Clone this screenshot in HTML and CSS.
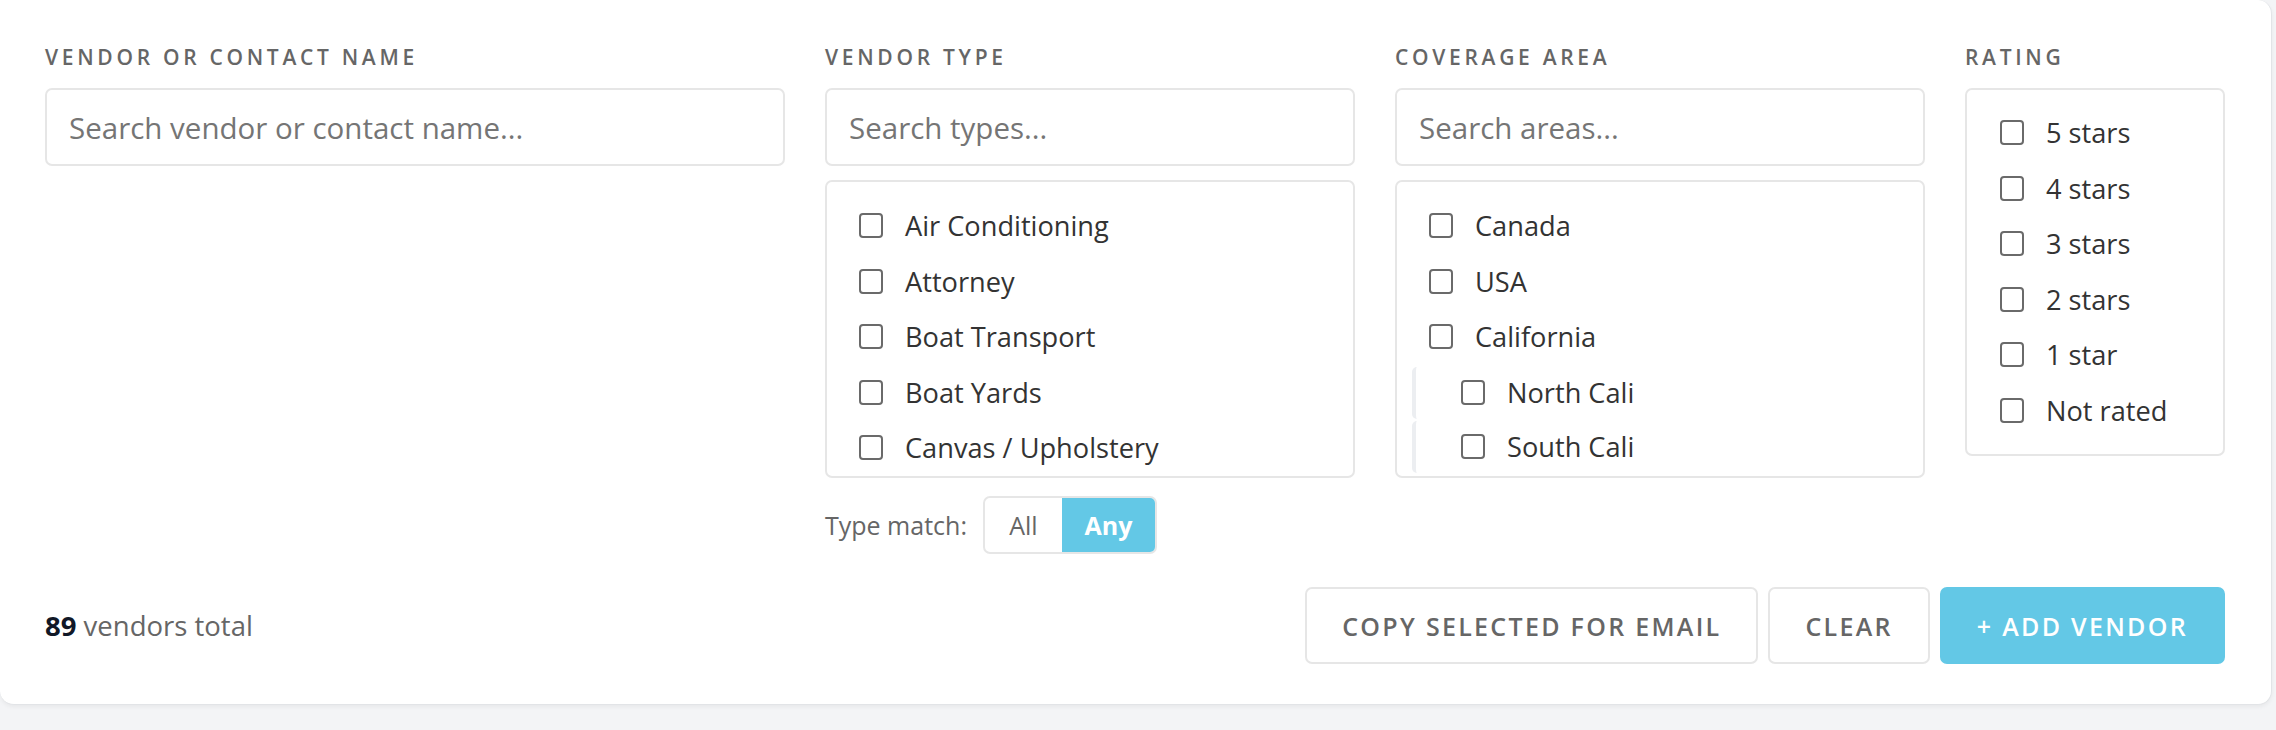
FILE: index.html
```html
<!DOCTYPE html>
<html lang="en">
<head>
<meta charset="utf-8">
<title>Vendors</title>
<link rel="stylesheet" href="styles.css">
</head>
<body>
<div class="card">
  <div class="filters">
    <div class="field">
      <div class="label">Vendor or contact name</div>
      <input class="search" type="text" placeholder="Search vendor or contact name...">
    </div>
    <div class="field">
      <div class="label">Vendor type</div>
      <input class="search" type="text" placeholder="Search types...">
      <div class="list">
        <label class="item"><input class="cb" type="checkbox"><span>Air Conditioning</span></label>
        <label class="item"><input class="cb" type="checkbox"><span>Attorney</span></label>
        <label class="item"><input class="cb" type="checkbox"><span>Boat Transport</span></label>
        <label class="item"><input class="cb" type="checkbox"><span>Boat Yards</span></label>
        <label class="item"><input class="cb" type="checkbox"><span>Canvas / Upholstery</span></label>
      </div>
      <div class="match">
        <span class="match-label">Type match:</span>
        <div class="seg">
          <span class="seg-opt">All</span>
          <span class="seg-opt active">Any</span>
        </div>
      </div>
    </div>
    <div class="field">
      <div class="label">Coverage area</div>
      <input class="search" type="text" placeholder="Search areas...">
      <div class="list">
        <label class="item"><input class="cb" type="checkbox"><span>Canada</span></label>
        <label class="item"><input class="cb" type="checkbox"><span>USA</span></label>
        <label class="item"><input class="cb" type="checkbox"><span>California</span></label>
        <label class="item nested"><input class="cb" type="checkbox"><span>North Cali</span></label>
        <label class="item nested"><input class="cb" type="checkbox"><span>South Cali</span></label>
      </div>
    </div>
    <div class="field">
      <div class="label">Rating</div>
      <div class="list rating">
        <label class="item"><input class="cb" type="checkbox"><span>5 stars</span></label>
        <label class="item"><input class="cb" type="checkbox"><span>4 stars</span></label>
        <label class="item"><input class="cb" type="checkbox"><span>3 stars</span></label>
        <label class="item"><input class="cb" type="checkbox"><span>2 stars</span></label>
        <label class="item"><input class="cb" type="checkbox"><span>1 star</span></label>
        <label class="item"><input class="cb" type="checkbox"><span>Not rated</span></label>
      </div>
    </div>
  </div>
  <div class="footer">
    <div class="total"><strong>89</strong> vendors total</div>
    <div class="actions">
      <button class="btn" type="button">Copy selected for email</button>
      <button class="btn" type="button">Clear</button>
      <button class="btn primary" type="button">+ Add vendor</button>
    </div>
  </div>
</div>
</body>
</html>
```
FILE: styles.css
```css
* { box-sizing: border-box; }

html, body {
  margin: 0;
  padding: 0;
}

body {
  background: #f3f4f6;
  font-family: "Open Sans", "Noto Sans", "Liberation Sans", sans-serif;
  color: #333;
  height: 730px;
  overflow: hidden;
}

.card {
  width: 2272px;
  background: #fff;
  border: 1px solid #e2e4e7;
  border-top: none;
  border-left: none;
  border-radius: 0 14px 14px 14px;
  box-shadow: 0 2px 4px rgba(0, 0, 0, 0.05);
  padding: 42px 46px 40px 45px;
}

.filters {
  display: grid;
  grid-template-columns: 37fr 26.5fr 26.5fr 13fr;
  column-gap: 40px;
  align-items: start;
}

.field {
  display: flex;
  flex-direction: column;
  min-width: 0;
}

.label {
  font-size: 21px;
  line-height: 30px;
  font-weight: 600;
  letter-spacing: 3.7px;
  text-transform: uppercase;
  color: #666;
  margin-bottom: 16px;
  white-space: nowrap;
}

.search {
  height: 78px;
  width: 100%;
  border: 2px solid #e6e6e6;
  border-radius: 7px;
  padding: 0 22px;
  font-family: inherit;
  font-size: 29.5px;
  color: #333;
  background: #fff;
  outline: none;
}

.search::placeholder {
  color: #757575;
}

.list {
  margin-top: 14px;
  height: 298px;
  border: 2px solid #e6e6e6;
  border-radius: 7px;
  padding: 16px 0 16px 32px;
  overflow: hidden;
}

.list.rating {
  margin-top: 0;
  height: 368px;
  padding-top: 15px;
  padding-left: 33px;
}

.item {
  display: flex;
  align-items: center;
  gap: 22px;
  height: 55.5px;
  font-size: 27.2px;
  color: #333;
  white-space: nowrap;
}

.item.nested {
  height: 52px;
  margin: 2px 0 1.5px -17px;
  padding-left: 45px;
  border-left: 4px solid #eceef1;
  border-radius: 5px;
}

.cb {
  appearance: none;
  -webkit-appearance: none;
  margin: 0;
  flex: none;
  width: 24px;
  height: 25px;
  border: 2px solid #6a6a6a;
  border-radius: 4px;
  background: #fff;
}

.match {
  margin-top: 18px;
  display: flex;
  align-items: center;
  gap: 16px;
}

.match-label {
  font-size: 25px;
  color: #666;
}

.seg {
  display: flex;
  height: 58px;
  border: 2px solid #e6e6e6;
  border-radius: 7px;
  overflow: hidden;
}

.seg-opt {
  display: flex;
  align-items: center;
  justify-content: center;
  font-size: 25px;
  color: #666;
  width: 77px;
}

.seg-opt.active {
  width: 93px;
  background: #63c8e6;
  color: #fff;
  font-weight: 700;
}

.footer {
  margin-top: 33px;
  display: flex;
  align-items: center;
  justify-content: space-between;
}

.total {
  font-size: 27.5px;
  color: #666;
}

.total strong {
  color: #111827;
  font-weight: 700;
}

.actions {
  display: flex;
  gap: 10px;
}

.btn {
  height: 77px;
  border: 2px solid #e6e6e6;
  border-radius: 7px;
  background: #fff;
  font-family: inherit;
  font-size: 25px;
  font-weight: 600;
  letter-spacing: 2.3px;
  text-transform: uppercase;
  color: #666;
  padding: 0 35px;
}

.btn.primary {
  background: #63c8e6;
  border-color: #63c8e6;
  color: #fff;
}
```
